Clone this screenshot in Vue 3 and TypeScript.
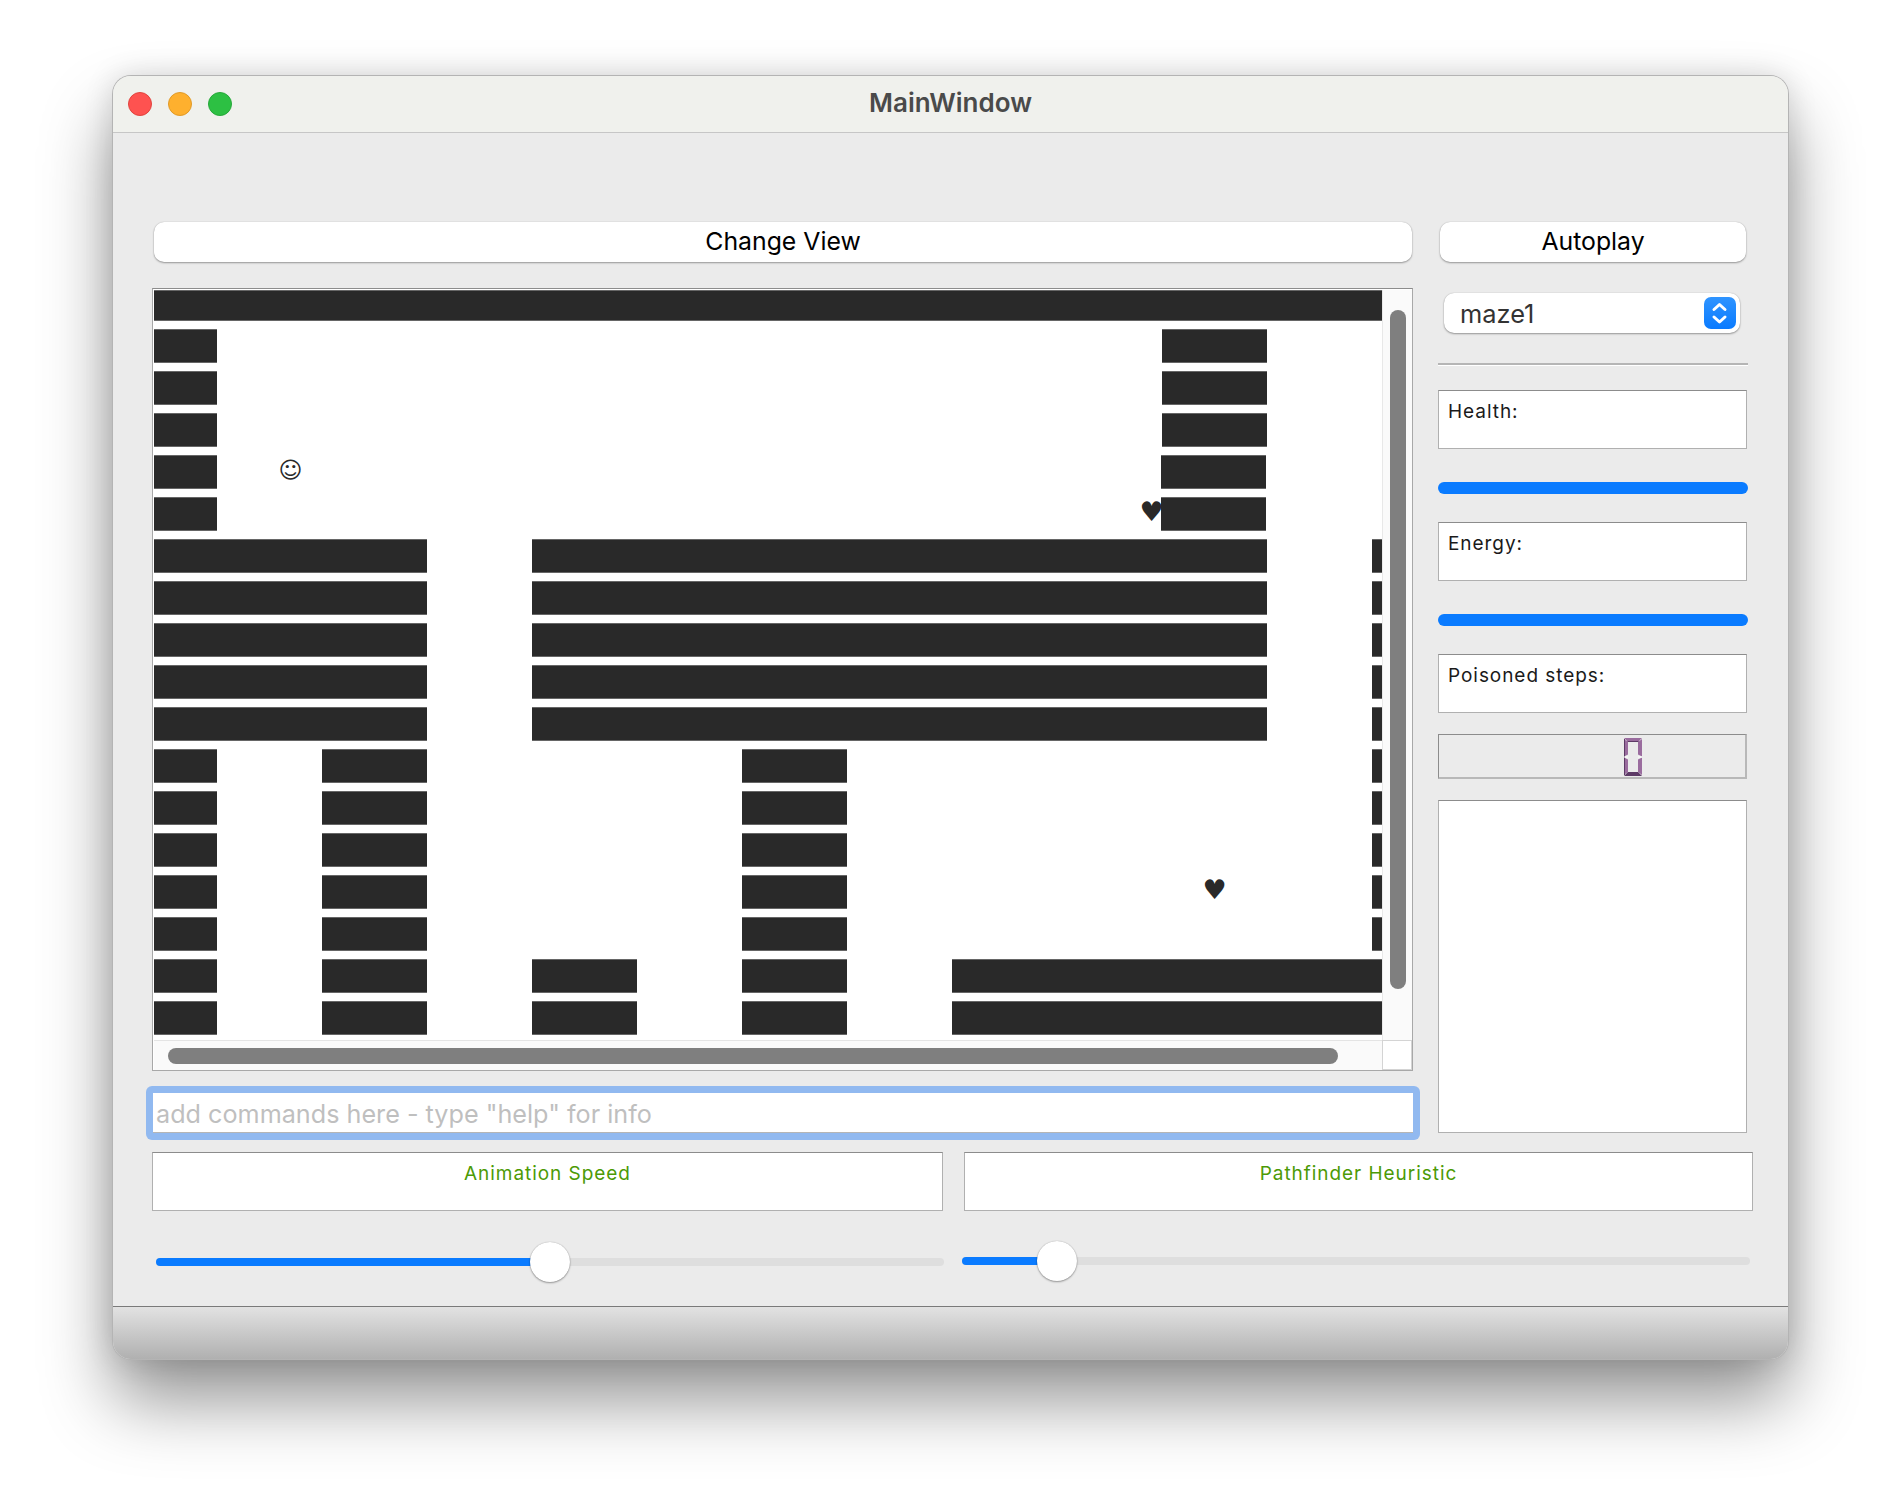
<template>
  <div class="page">
    <div class="window">
      <header class="titlebar">
        <div class="lights">
          <span class="light red"></span>
          <span class="light yellow"></span>
          <span class="light green"></span>
        </div>
        <div class="title">MainWindow</div>
      </header>

      <main class="content">
        <div class="top">
          <div class="left-col">
            <button class="push change-view" type="button">Change View</button>

            <div class="scroll-view">
              <div class="viewport">
                <div class="maze">
                  <div
                    v-for="(wall, i) in walls"
                    :key="i"
                    class="wall"
                    :class="{ nudged: wall.nudged }"
                    :style="{ gridRow: wall.row + 1, gridColumn: `${wall.from + 1} / ${wall.to + 1}` }"
                  ></div>
                  <div
                    v-for="item in items"
                    :key="item.key"
                    class="item"
                    :class="item.kind"
                    :style="{ gridRow: item.row + 1, gridColumn: item.col + 1 }"
                  >{{ item.glyph }}</div>
                </div>
              </div>
              <div class="vbar"><div class="vthumb"></div></div>
              <div class="hbar"><div class="hthumb"></div></div>
              <div class="corner"></div>
            </div>

            <div class="command">
              <input class="command-input" type="text" placeholder='add commands here - type "help" for info' />
            </div>
          </div>

          <aside class="right-col">
            <button class="push autoplay" type="button">Autoplay</button>

            <div class="combo">
              <span class="combo-text">maze1</span>
              <span class="combo-arrows">
                <svg width="32" height="32" viewBox="0 0 32 32" fill="none" stroke="#fff" stroke-width="3" stroke-linecap="round" stroke-linejoin="round">
                  <path d="M10 12.5 15.5 7.5 21 12.5" />
                  <path d="M10 20 15.5 25 21 20" />
                </svg>
              </span>
            </div>

            <div class="divider"></div>

            <div class="box stat">Health:</div>
            <div class="bar"></div>
            <div class="box stat energy">Energy:</div>
            <div class="bar"></div>
            <div class="box stat poison">Poisoned steps:</div>

            <div class="lcd">
              <svg width="18" height="38" viewBox="0 0 18 38">
                <g fill="#9a6c9e">
                  <path d="M0 0H18L14 4H4Z" />
                  <path d="M0 1V18.5L4 16.5V4Z" />
                  <path d="M18 1V18.5L14 16.5V4Z" />
                  <path d="M0 19.5V37L4 34V21.5Z" />
                  <path d="M18 19.5V37L14 34V21.5Z" />
                </g>
                <g fill="#5d3a66">
                  <path d="M0 38H18L14 34H4Z" />
                  <path d="M3 3H15L14 4H4Z" />
                  <path d="M0 1H1V37H0Z" />
                </g>
                <path d="M0 18.5H4V19.5H0ZM14 18.5H18V19.5H14Z" fill="#fff" />
              </svg>
            </div>

            <div class="box list"></div>
          </aside>
        </div>

        <div class="groups">
          <div class="box group anim">Animation Speed</div>
          <div class="box group path">Pathfinder Heuristic</div>
        </div>

        <div class="sliders">
          <div class="slider slider-a">
            <div class="fill" :style="{ width: '394px' }"></div>
            <div class="handle"></div>
          </div>
          <div class="slider slider-b">
            <div class="fill" :style="{ width: '95px' }"></div>
            <div class="handle"></div>
          </div>
        </div>
      </main>

      <footer class="statusbar"></footer>
    </div>
  </div>
</template>

<script setup lang="ts">
interface Wall {
  row: number
  from: number
  to: number
  nudged?: boolean
}

// column spans of the wall blocks, one cell is 21px wide
const layout: [number, number, [number, number][]][] = [
  [0, 0, [[0, 60]]],
  [1, 3, [[0, 3], [48, 53]]],
  [4, 5, [[0, 3], [48, 53]]],
  [6, 10, [[0, 13], [18, 53], [58, 60]]],
  [11, 15, [[0, 3], [8, 13], [28, 33], [58, 60]]],
  [16, 17, [[0, 3], [8, 13], [18, 23], [28, 33], [38, 60]]]
]

const walls: Wall[] = []
for (const [first, last, spans] of layout) {
  for (let row = first; row <= last; row++) {
    for (const [from, to] of spans) {
      walls.push({ row, from, to, nudged: (row === 4 || row === 5) && from === 48 })
    }
  }
}

const items = [
  { key: 'player', kind: 'smiley', glyph: '☺', row: 4, col: 6 },
  { key: 'heart1', kind: 'heart', glyph: '♥', row: 5, col: 47 },
  { key: 'heart2', kind: 'heart', glyph: '♥', row: 14, col: 50 }
]
</script>

<style>
html,
body {
  margin: 0;
  background: #fff;
}
</style>

<style scoped>
.page {
  box-sizing: border-box;
  width: 1900px;
  height: 1508px;
  padding: 76px 112px 0 113px;
  overflow: hidden;
  font-family: Inter, "Liberation Sans", sans-serif;
}

.window {
  box-sizing: border-box;
  height: 1283px;
  display: flex;
  flex-direction: column;
  background: #ebebeb;
  border-radius: 18px;
  overflow: hidden;
  box-shadow: 0 0 0 1px #b4b4b4, 0 42px 70px rgba(0, 0, 0, 0.42), 0 0 30px rgba(0, 0, 0, 0.14);
}

.titlebar {
  position: relative;
  flex: none;
  height: 57px;
  box-sizing: border-box;
  display: flex;
  align-items: center;
  justify-content: center;
  background: #f0f1ed;
  border-bottom: 1px solid #c6c6c6;
}

.lights {
  position: absolute;
  left: 15px;
  top: 16px;
  display: flex;
  gap: 16px;
}

.light {
  width: 24px;
  height: 24px;
  box-sizing: border-box;
  border-radius: 50%;
  border: 1px solid;
}

.red {
  background: #fe5250;
  border-color: #e0443e;
}

.yellow {
  background: #feb02e;
  border-color: #e09a28;
}

.green {
  background: #2dc043;
  border-color: #27a83a;
}

.title {
  font-size: 26px;
  font-weight: 600;
  color: #4a4a4a;
  margin-top: -3px;
}

.content {
  flex: 1;
  box-sizing: border-box;
  padding: 89px 0 0 39px;
}

.top {
  display: flex;
  gap: 25px;
}

.left-col {
  width: 1261px;
  flex: none;
}

.right-col {
  width: 310px;
  flex: none;
}

.push {
  display: block;
  box-sizing: border-box;
  height: 40px;
  padding: 0 0 2px;
  border: none;
  border-radius: 10px;
  background: #fff;
  color: #000;
  font-family: inherit;
  font-size: 24.8px;
  box-shadow: 0 1px 2px rgba(0, 0, 0, 0.35), 0 0 1px rgba(0, 0, 0, 0.25);
}

.change-view {
  width: 1258px;
  margin-left: 2px;
}

.autoplay {
  width: 306px;
  margin-left: 2px;
}

.scroll-view {
  box-sizing: border-box;
  height: 783px;
  margin-top: 26px;
  display: grid;
  grid-template-columns: 1fr 30px;
  grid-template-rows: 1fr 30px;
  background: #fff;
  border: 1px solid #a8a8a8;
  border-top-color: #8c8c8c;
  padding: 1px 0 0 1px;
}

.viewport {
  overflow: hidden;
  min-width: 0;
  min-height: 0;
}

.maze {
  display: grid;
  grid-template-columns: repeat(60, 21px);
  grid-template-rows: 31px repeat(17, 34px);
  row-gap: 8px;
}

.wall {
  background: #292929;
  box-shadow: inset 0 -1px 0 #666, inset 0 1px 0 #666;
}

.nudged {
  transform: translateX(-1px);
}

.item {
  display: flex;
  align-items: center;
  justify-content: center;
  color: #292929;
  font-family: "DejaVu Sans", sans-serif;
  z-index: 1;
}

.smiley {
  font-size: 23px;
  padding-bottom: 5px;
}

.heart {
  font-size: 27px;
  padding-bottom: 6px;
}

.vbar {
  background: #fafafa;
  border-left: 1px solid #e8e8e8;
  padding: 20px 6px 0 7px;
  box-sizing: border-box;
}

.vthumb {
  height: 679px;
  border-radius: 8px;
  background: #7f7f7f;
}

.hbar {
  background: #fafafa;
  border-top: 1px solid #e4e4e4;
  padding: 7px 0 0 14px;
  box-sizing: border-box;
}

.hthumb {
  width: 1170px;
  height: 16px;
  border-radius: 8px;
  background: #7f7f7f;
}

.corner {
  background: #fff;
  border: 1px solid #d4d4d4;
  box-sizing: border-box;
}

.command {
  box-sizing: border-box;
  width: 1274px;
  height: 54px;
  margin: 15px 0 0 -6px;
  padding: 7px;
  border-radius: 6px;
  background: #91b9f0;
}

.command-input {
  display: block;
  box-sizing: border-box;
  width: 100%;
  height: 40px;
  padding: 2px 3px 0;
  border: none;
  border-bottom: 1px solid #b5b5b5;
  outline: none;
  background: #fff;
  font-family: inherit;
  font-size: 25.2px;
}

.command-input::placeholder {
  color: #bfbfbf;
  opacity: 1;
}

.combo {
  box-sizing: border-box;
  width: 296px;
  height: 40px;
  margin: 31px 0 0 6px;
  padding: 0 4px 0 16px;
  display: flex;
  align-items: center;
  justify-content: space-between;
  background: #fff;
  border-radius: 10px;
  box-shadow: 0 1px 2px rgba(0, 0, 0, 0.35), 0 0 1px rgba(0, 0, 0, 0.25);
}

.combo-text {
  font-size: 25.4px;
  color: #333;
}

.combo-arrows {
  width: 32px;
  height: 32px;
  border-radius: 7px;
  background: linear-gradient(#2f94ff, #0a7bff);
}

.combo-arrows svg {
  display: block;
}

.divider {
  height: 2px;
  margin-top: 30px;
  background: #b5b5b5;
  box-shadow: 0 1px 0 #fff;
}

.box {
  box-sizing: border-box;
  background: #fff;
  border: 1px solid #b0b0b0;
  border-top-color: #8c8c8c;
}

.stat {
  height: 59px;
  width: 309px;
  padding: 9px 0 0 9px;
  font-size: 19px;
  line-height: 23px;
  letter-spacing: 0.95px;
  color: #1a1a1a;
}

.right-col > .stat:nth-of-type(n) {
  margin-top: 28px;
}

.right-col > .divider + .stat {
  margin-top: 25px;
}

.bar {
  width: 310px;
  height: 12px;
  margin-top: 33px;
  border-radius: 6px;
  background: #0a7bff;
}

.lcd {
  box-sizing: border-box;
  width: 309px;
  height: 45px;
  margin-top: 21px;
  padding: 3px 0 0 185px;
  background: #ebebeb;
  border: 1px solid #8c8c8c;
  border-right: 2px solid #b8b8b8;
  border-bottom: 2px solid #b8b8b8;
}

.lcd svg {
  display: block;
}

.list {
  width: 309px;
  height: 333px;
  margin-top: 21px;
}

.groups {
  display: flex;
  gap: 21px;
  margin-top: 12px;
}

.group {
  height: 59px;
  padding-top: 9px;
  text-align: center;
  font-size: 19px;
  line-height: 23px;
  letter-spacing: 0.95px;
  color: #4c9a05;
}

.anim {
  width: 791px;
}

.path {
  width: 789px;
}

.sliders {
  display: flex;
  margin-top: 47px;
}

.slider {
  position: relative;
  height: 8px;
  border-radius: 4px;
  background: #dedede;
}

.slider-a {
  width: 788px;
  margin-left: 4px;
}

.slider-b {
  width: 788px;
  margin-left: 18px;
  margin-top: -1px;
}

.fill {
  height: 100%;
  border-radius: 4px;
  background: #0a7bff;
}

.handle {
  position: absolute;
  top: -16px;
  width: 40px;
  height: 40px;
  border-radius: 50%;
  background: #fff;
  box-shadow: 0 1px 2px rgba(0, 0, 0, 0.35), 0 0 1px rgba(0, 0, 0, 0.3);
}

.slider-a .handle {
  left: 374px;
}

.slider-b .handle {
  left: 75px;
}

.statusbar {
  flex: none;
  height: 53px;
  box-sizing: border-box;
  border-top: 1px solid #7a7a7a;
  background: linear-gradient(#e2e2e2, #b0b0b0);
}
</style>
